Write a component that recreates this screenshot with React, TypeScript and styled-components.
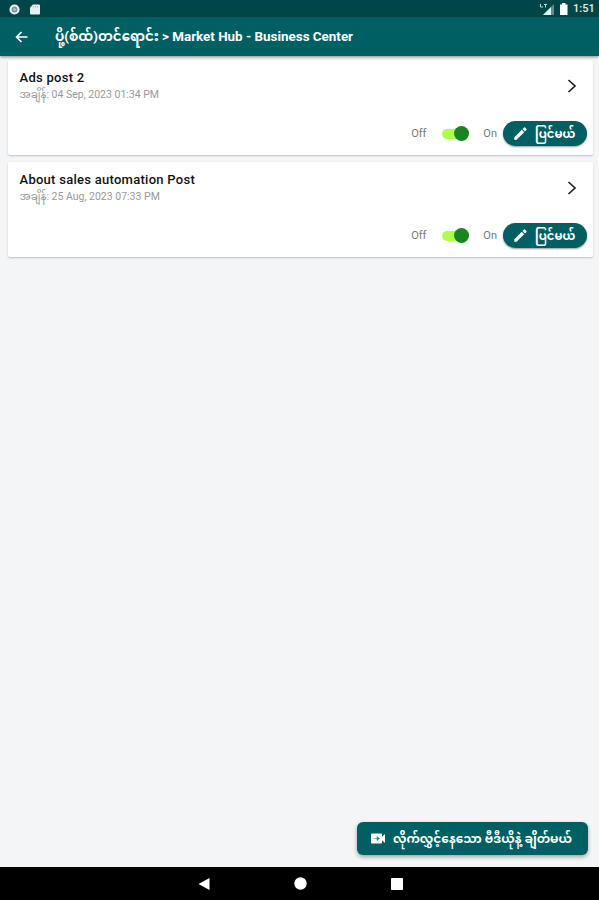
import React from 'react';
import styled, { createGlobalStyle } from 'styled-components';

const Global = createGlobalStyle`
  * { box-sizing: border-box; }
  body { margin: 0; background: #f3f5f7; font-family: Roboto, "Noto Sans Myanmar", "Noto Sans", sans-serif; }
`;

const Screen = styled.div`
  width: 599px;
  height: 900px;
  display: flex;
  flex-direction: column;
  overflow: hidden;
  background: #f3f5f7;
`;

const StatusBar = styled.div`
  height: 17px;
  flex: none;
  display: flex;
  align-items: center;
  padding: 1px 5px 0 9px;
  background: #004648;
  color: #e6f0f0;
`;

const Notifications = styled.div`
  display: flex;
  gap: 10px;
  flex: 1;
`;

const Clock = styled.span`
  width: 21px;
  margin-left: 5px;
  font-size: 11px;
  line-height: 16px;
  font-weight: 500;
  white-space: nowrap;
`;

const AppBar = styled.header`
  height: 39px;
  flex: none;
  display: flex;
  align-items: center;
  padding-left: 15px;
  background: #005f62;
  color: #fff;
  box-shadow: 0 1px 3px rgba(0, 0, 0, 0.45);
  z-index: 1;
`;

const BackIcon = styled.svg`
  width: 13px;
  height: 12px;
  margin-right: 27px;
`;

const Title = styled.h1`
  display: flex;
  align-items: center;
  margin: 0;
  font-size: 13.4px;
  line-height: 24px;
  height: 26px;
  font-weight: 700;
  white-space: nowrap;
`;

const Fit = styled.span<{ $w: number }>`
  display: inline-block;
  width: ${p => p.$w}px;
  text-align: left;
  white-space: nowrap;
`;

const List = styled.main`
  flex: 1;
  display: flex;
  flex-direction: column;
  gap: 7px;
  padding: 4px 6px 0 8px;
`;

const Card = styled.article`
  height: 95px;
  display: flex;
  flex-direction: column;
  justify-content: space-between;
  padding: 9px 6px 9px 11.5px;
  background: #fff;
  border-radius: 2px;
  box-shadow: 0 1px 2px rgba(0, 0, 0, 0.22);
`;

const CardTop = styled.div`
  display: flex;
  justify-content: space-between;
  padding-right: 10px;
`;

const PostName = styled.h2`
  margin: 0;
  font-size: 13px;
  line-height: 17px;
  font-weight: 500;
  letter-spacing: 0.27px;
  color: #111;
`;

const PostDate = styled.div`
  display: flex;
  font-size: 10.5px;
  line-height: 17px;
  color: #999;
`;

const Chevron = styled.svg`
  width: 10px;
  height: 14px;
  margin-top: 10px;
`;

const Actions = styled.div`
  display: flex;
  align-items: center;
  justify-content: flex-end;
`;

const SwitchLabel = styled.span`
  font-size: 11px;
  line-height: 16px;
  color: #777;
`;

const Track = styled.span`
  display: flex;
  justify-content: flex-end;
  align-items: center;
  width: 27px;
  height: 10px;
  margin: 0 14px 0 16px;
  border-radius: 5px;
  background: #adff4b;
`;

const Thumb = styled.span`
  width: 15px;
  height: 15px;
  border-radius: 50%;
  background: #198421;
  flex: none;
`;

const EditButton = styled.button`
  display: flex;
  align-items: center;
  gap: 7px;
  width: 84px;
  height: 25px;
  margin-left: 6px;
  padding: 0 0 0 10px;
  border: 0;
  border-radius: 13px;
  background: #005f62;
  box-shadow: 0 1px 2px rgba(0, 0, 0, 0.4);
  color: #fff;
  font: 700 11.5px/24px Roboto, "Noto Sans Myanmar", sans-serif;
`;

const Footer = styled.div`
  flex: none;
  display: flex;
  justify-content: flex-end;
  padding: 0 11px 12px 0;
`;

const VideoButton = styled.button`
  display: flex;
  align-items: center;
  gap: 8px;
  width: 231px;
  height: 33px;
  padding: 0 0 0 14px;
  border: 0;
  border-radius: 6px;
  background: #005f62;
  box-shadow: 0 2px 4px rgba(0, 0, 0, 0.35);
  color: #fff;
  font: 700 12.1px/26px Roboto, "Noto Sans Myanmar", sans-serif;
`;

const NavBar = styled.nav`
  height: 33px;
  flex: none;
  display: flex;
  align-items: center;
  justify-content: center;
  gap: 84px;
  padding-left: 1px;
  background: #000;
`;

const posts = [
  { name: 'Ads post 2', date: '04 Sep, 2023 01:34 PM' },
  { name: 'About sales automation Post', date: '25 Aug, 2023 07:33 PM' },
];

export default function App() {
  return (
    <>
      <Global />
      <Screen>
        <StatusBar>
          <Notifications>
            <svg width="11" height="11" viewBox="0 0 11 11">
              <circle cx="5.5" cy="5.5" r="4" fill="#719698" stroke="#e6f0f0" strokeWidth="2.2" />
              <circle cx="5.5" cy="5.5" r="1.3" fill="#b9cfd0" />
            </svg>
            <svg width="10" height="11" viewBox="0 0 10 11">
              <path d="M3 0.5H9a1 1 0 0 1 1 1V9.5a1 1 0 0 1-1 1H1a1 1 0 0 1-1-1V3.5Z" fill="#e6f0f0" />
              <path d="M3.5 2v1.5M5.5 2v1.5M7.5 2v1.5" stroke="#a5bfc0" />
            </svg>
          </Notifications>
          <svg width="28" height="13" viewBox="0 0 28 13">
            <path d="M3 12 14 1V12Z" fill="#638a8c" />
            <path d="M3 12 11 4V12Z" fill="#e6f0f0" />
            <path d="M0.5 1v3H3M4 1.5h3M5.5 1.5v3" stroke="#c7d9da" fill="none" />
            <path d="M20 1.5h2V0h3.5v1.5H27.5V12H20Z" fill="#fff" />
          </svg>
          <Clock>1:51</Clock>
        </StatusBar>
        <AppBar>
          <BackIcon viewBox="0 0 13 12">
            <path d="M12.5 6H1.5M6.5 1 1.5 6l5 5" fill="none" stroke="#fff" strokeWidth="1.6" />
          </BackIcon>
          <Title>
            <Fit $w={107}>ပို့(စ်ထ်)တင်ရောင်း</Fit>
            <span>&gt; Market Hub - Business Center</span>
          </Title>
        </AppBar>
        <List>
          {posts.map(post => (
            <Card key={post.name}>
              <CardTop>
                <div>
                  <PostName>{post.name}</PostName>
                  <PostDate>
                    <Fit $w={32}>အချိန်:</Fit>
                    <span>{post.date}</span>
                  </PostDate>
                </div>
                <Chevron viewBox="0 0 10 14">
                  <path d="m1.5 1 6.5 6-6.5 6" fill="none" stroke="#222" strokeWidth="1.7" />
                </Chevron>
              </CardTop>
              <Actions>
                <SwitchLabel>Off</SwitchLabel>
                <Track><Thumb /></Track>
                <SwitchLabel>On</SwitchLabel>
                <EditButton>
                  <svg width="15" height="15" viewBox="0 0 24 24" fill="#fff">
                    <path d="M2 18.2V22h3.8L17.9 9.9l-3.8-3.8ZM21.5 6.3a1.2 1.2 0 0 0 0-1.7l-2.1-2.1a1.2 1.2 0 0 0-1.7 0l-2.4 2.4 3.8 3.8Z" />
                  </svg>
                  <Fit $w={42}>ပြင်မယ်</Fit>
                </EditButton>
              </Actions>
            </Card>
          ))}
        </List>
        <Footer>
          <VideoButton>
            <svg width="14" height="11" viewBox="0 0 14 11">
              <path d="M1 0.5h9a1 1 0 0 1 1 1v2.3L14 1v9l-3-2.8v2.3a1 1 0 0 1-1 1H1a1 1 0 0 1-1-1v-8a1 1 0 0 1 1-1Z" fill="#fff" />
              <path d="M2.5 5.5h5M6 3.5l2.5 2L6 7.5Z" stroke="#3c8587" strokeWidth="0.6" fill="#3c8587" />
            </svg>
            <Fit $w={181}>လိုက်လွှင့်နေသော ဗီဒီယိုနဲ့ ချိတ်မယ်</Fit>
          </VideoButton>
        </Footer>
        <NavBar>
          <svg width="12" height="14" viewBox="0 0 12 14"><path d="M0.5 7 11.5 1V13Z" fill="#fff" /></svg>
          <svg width="13" height="13" viewBox="0 0 13 13"><circle cx="6.5" cy="6.5" r="6.2" fill="#fff" /></svg>
          <svg width="12" height="12" viewBox="0 0 12 12"><rect width="12" height="12" rx="0.8" fill="#fff" /></svg>
        </NavBar>
      </Screen>
    </>
  );
}
